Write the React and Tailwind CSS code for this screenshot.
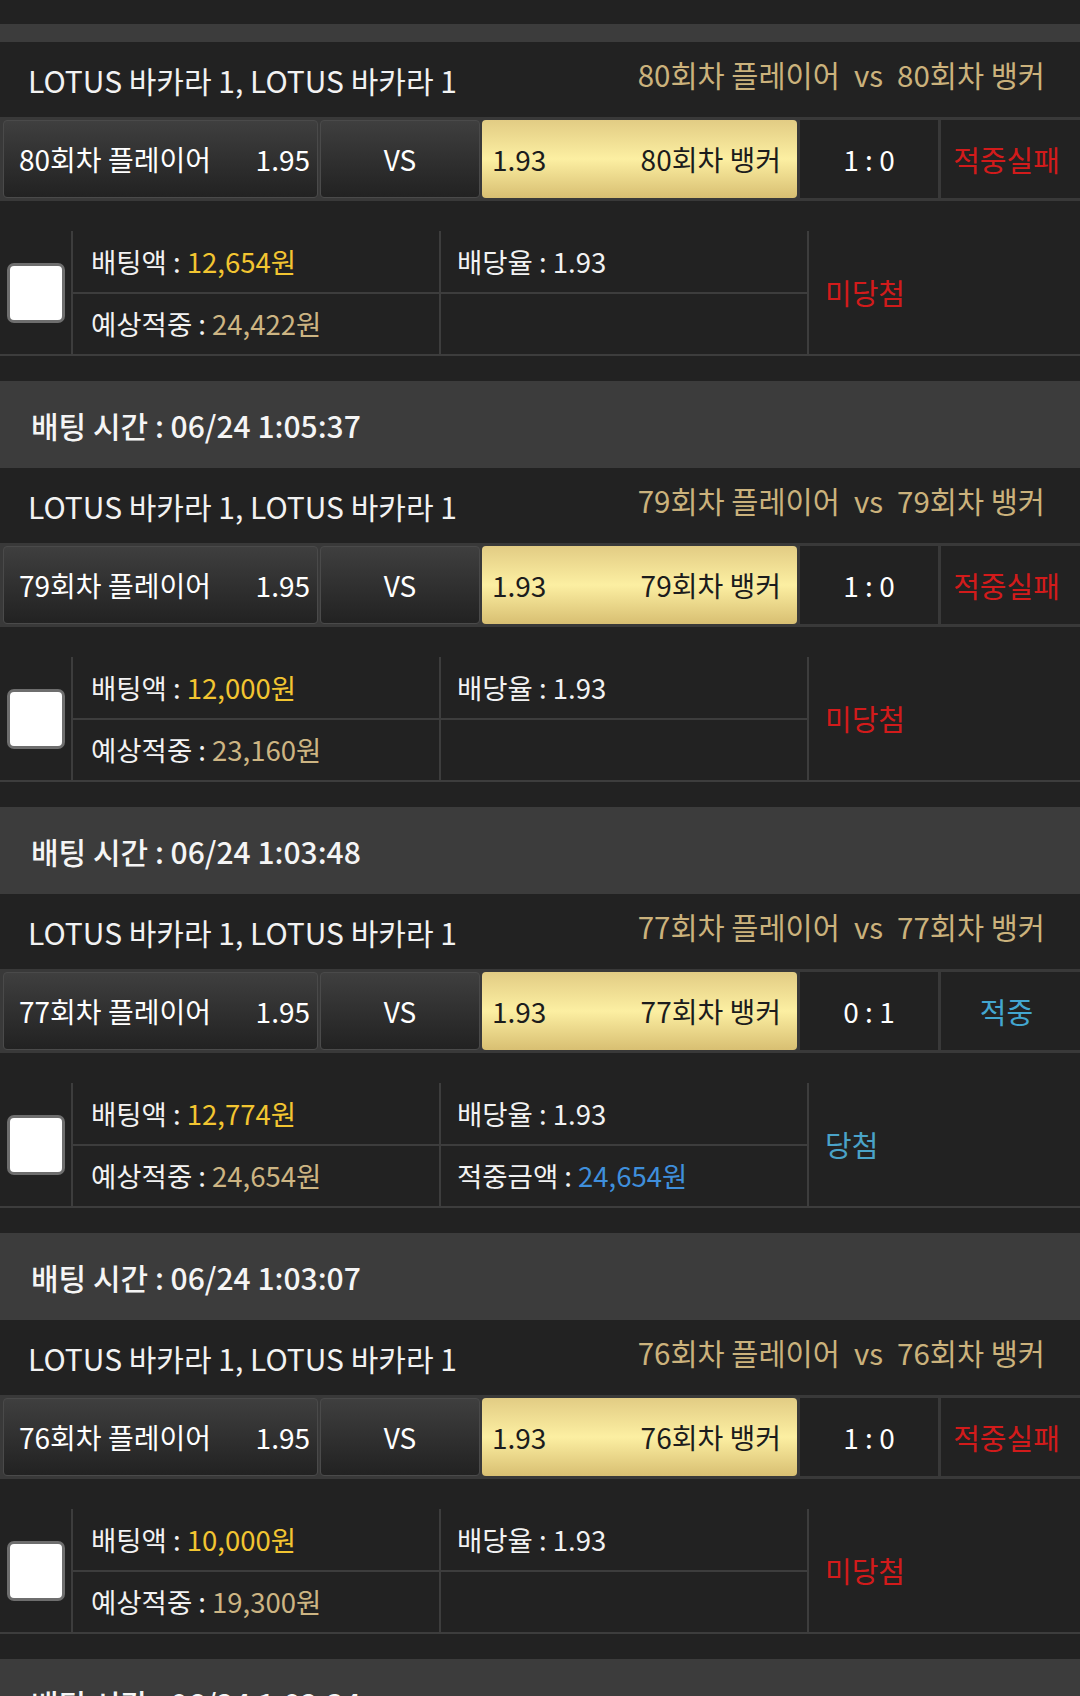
import React from "react";

const blocks = [
  { time: null, n: 80, score: "1 : 0", win: false, bet: "12,654원", exp: "24,422원", paid: null },
  { time: "06/24 1:05:37", n: 79, score: "1 : 0", win: false, bet: "12,000원", exp: "23,160원", paid: null },
  { time: "06/24 1:03:48", n: 77, score: "0 : 1", win: true, bet: "12,774원", exp: "24,654원", paid: "24,654원" },
  { time: "06/24 1:03:07", n: 76, score: "1 : 0", win: false, bet: "10,000원", exp: "19,300원", paid: null },
];

function Header({ time }) {
  return (
    <div className="h-[87px] bg-[#3c3c3c] flex items-center pl-[31px] text-[#f5f5f5] text-[30px] font-medium">
      배팅 시간 : {time}
    </div>
  );
}

function Body({ d }) {
  return (
    <div>
      <div className="h-[75px] flex items-center justify-between pl-[28px] pr-[35px]">
        <span className="text-[30px] text-[#f2f2f2]">LOTUS 바카라 1, LOTUS 바카라 1</span>
        <span className="text-[29.5px] text-[#cbb27c] pb-[10px]">
          {d.n}회차 플레이어<span className="mx-[14px]">vs</span>{d.n}회차 뱅커
        </span>
      </div>
      <div className="h-[84px] flex bg-[#393939] py-[3px] pl-[3px] gap-[2px]">
        <div className="w-[315px] rounded-[4px] border border-[#4a4a4a] bg-linear-to-b from-[#3f3f3f] to-[#222222] flex items-center justify-between pl-[15px] pr-[7px] text-white text-[28px]">
          <span>{d.n}회차 플레이어</span>
          <span>1.95</span>
        </div>
        <div className="w-[160px] rounded-[4px] border border-[#4a4a4a] bg-linear-to-b from-[#3f3f3f] to-[#222222] flex items-center justify-center text-white text-[28px]">
          VS
        </div>
        <div className="w-[315px] rounded-[4px] bg-linear-to-b from-[#e2cc84] via-[#fcefa2] to-[#d8bf72] flex items-center justify-between pl-[10px] pr-[16px] text-[#1c1c1c] text-[28px]">
          <span>1.93</span>
          <span>{d.n}회차 뱅커</span>
        </div>
        <div className="ml-[1px] w-[138px] bg-[#222222] flex items-center justify-center text-white text-[28px] whitespace-pre">
          {d.score}
        </div>
        <div className="ml-[1px] flex-1 bg-[#222222] flex items-center justify-center pr-[8px] text-[29px]">
          {d.win ? (
            <span className="text-[#43a6d0]">적중</span>
          ) : (
            <span className="text-[#d21b1b]">적중실패</span>
          )}
        </div>
      </div>
      <div className="h-[30px]" />
      <div className="flex border-b-2 border-[#3d3d3d]">
        <div className="w-[71px] flex items-center justify-center">
          <div className="w-[58px] h-[60px] rounded-[7px] bg-white border-[3px] border-[#6e6e6e]" />
        </div>
        <div className="w-[738px] border-l-2 border-r-2 border-[#3d3d3d] flex flex-col text-[27.5px] text-[#f2f2f2]">
          <div className="h-[63px] flex border-b-2 border-[#3d3d3d]">
            <div className="w-[366px] flex items-center pl-[18px]">
              배팅액 : <span className="ml-[6px] text-[#f2c531]">{d.bet}</span>
            </div>
            <div className="flex-1 border-l-2 border-[#3d3d3d] flex items-center pl-[16px]">
              배당율 : <span className="ml-[6px]">1.93</span>
            </div>
          </div>
          <div className="h-[60px] flex">
            <div className="w-[366px] flex items-center pl-[18px]">
              예상적중 : <span className="ml-[6px] text-[#cdb583]">{d.exp}</span>
            </div>
            <div className="flex-1 border-l-2 border-[#3d3d3d] flex items-center pl-[16px]">
              {d.paid ? (
                <>
                  적중금액 : <span className="ml-[6px] text-[#3f8fdc]">{d.paid}</span>
                </>
              ) : null}
            </div>
          </div>
        </div>
        <div className="flex-1 flex items-center pl-[16px] text-[29px]">
          {d.win ? (
            <span className="text-[#4aa3c8]">당첨</span>
          ) : (
            <span className="text-[#d21b1b]">미당첨</span>
          )}
        </div>
      </div>
      <div className="h-[25px]" />
    </div>
  );
}

export default function App() {
  return (
    <div className="w-[1080px] h-[1696px] overflow-hidden bg-[#222222] font-['Noto_Sans_CJK_KR','Noto_Sans',sans-serif] leading-none">
      <div className="h-[24px]" />
      <div className="h-[18px] bg-[#3c3c3c]" />
      {blocks.map((d, i) => (
        <div key={i}>
          {d.time && <Header time={d.time} />}
          <Body d={d} />
        </div>
      ))}
      <Header time="06/24 1:02:34" />
    </div>
  );
}
